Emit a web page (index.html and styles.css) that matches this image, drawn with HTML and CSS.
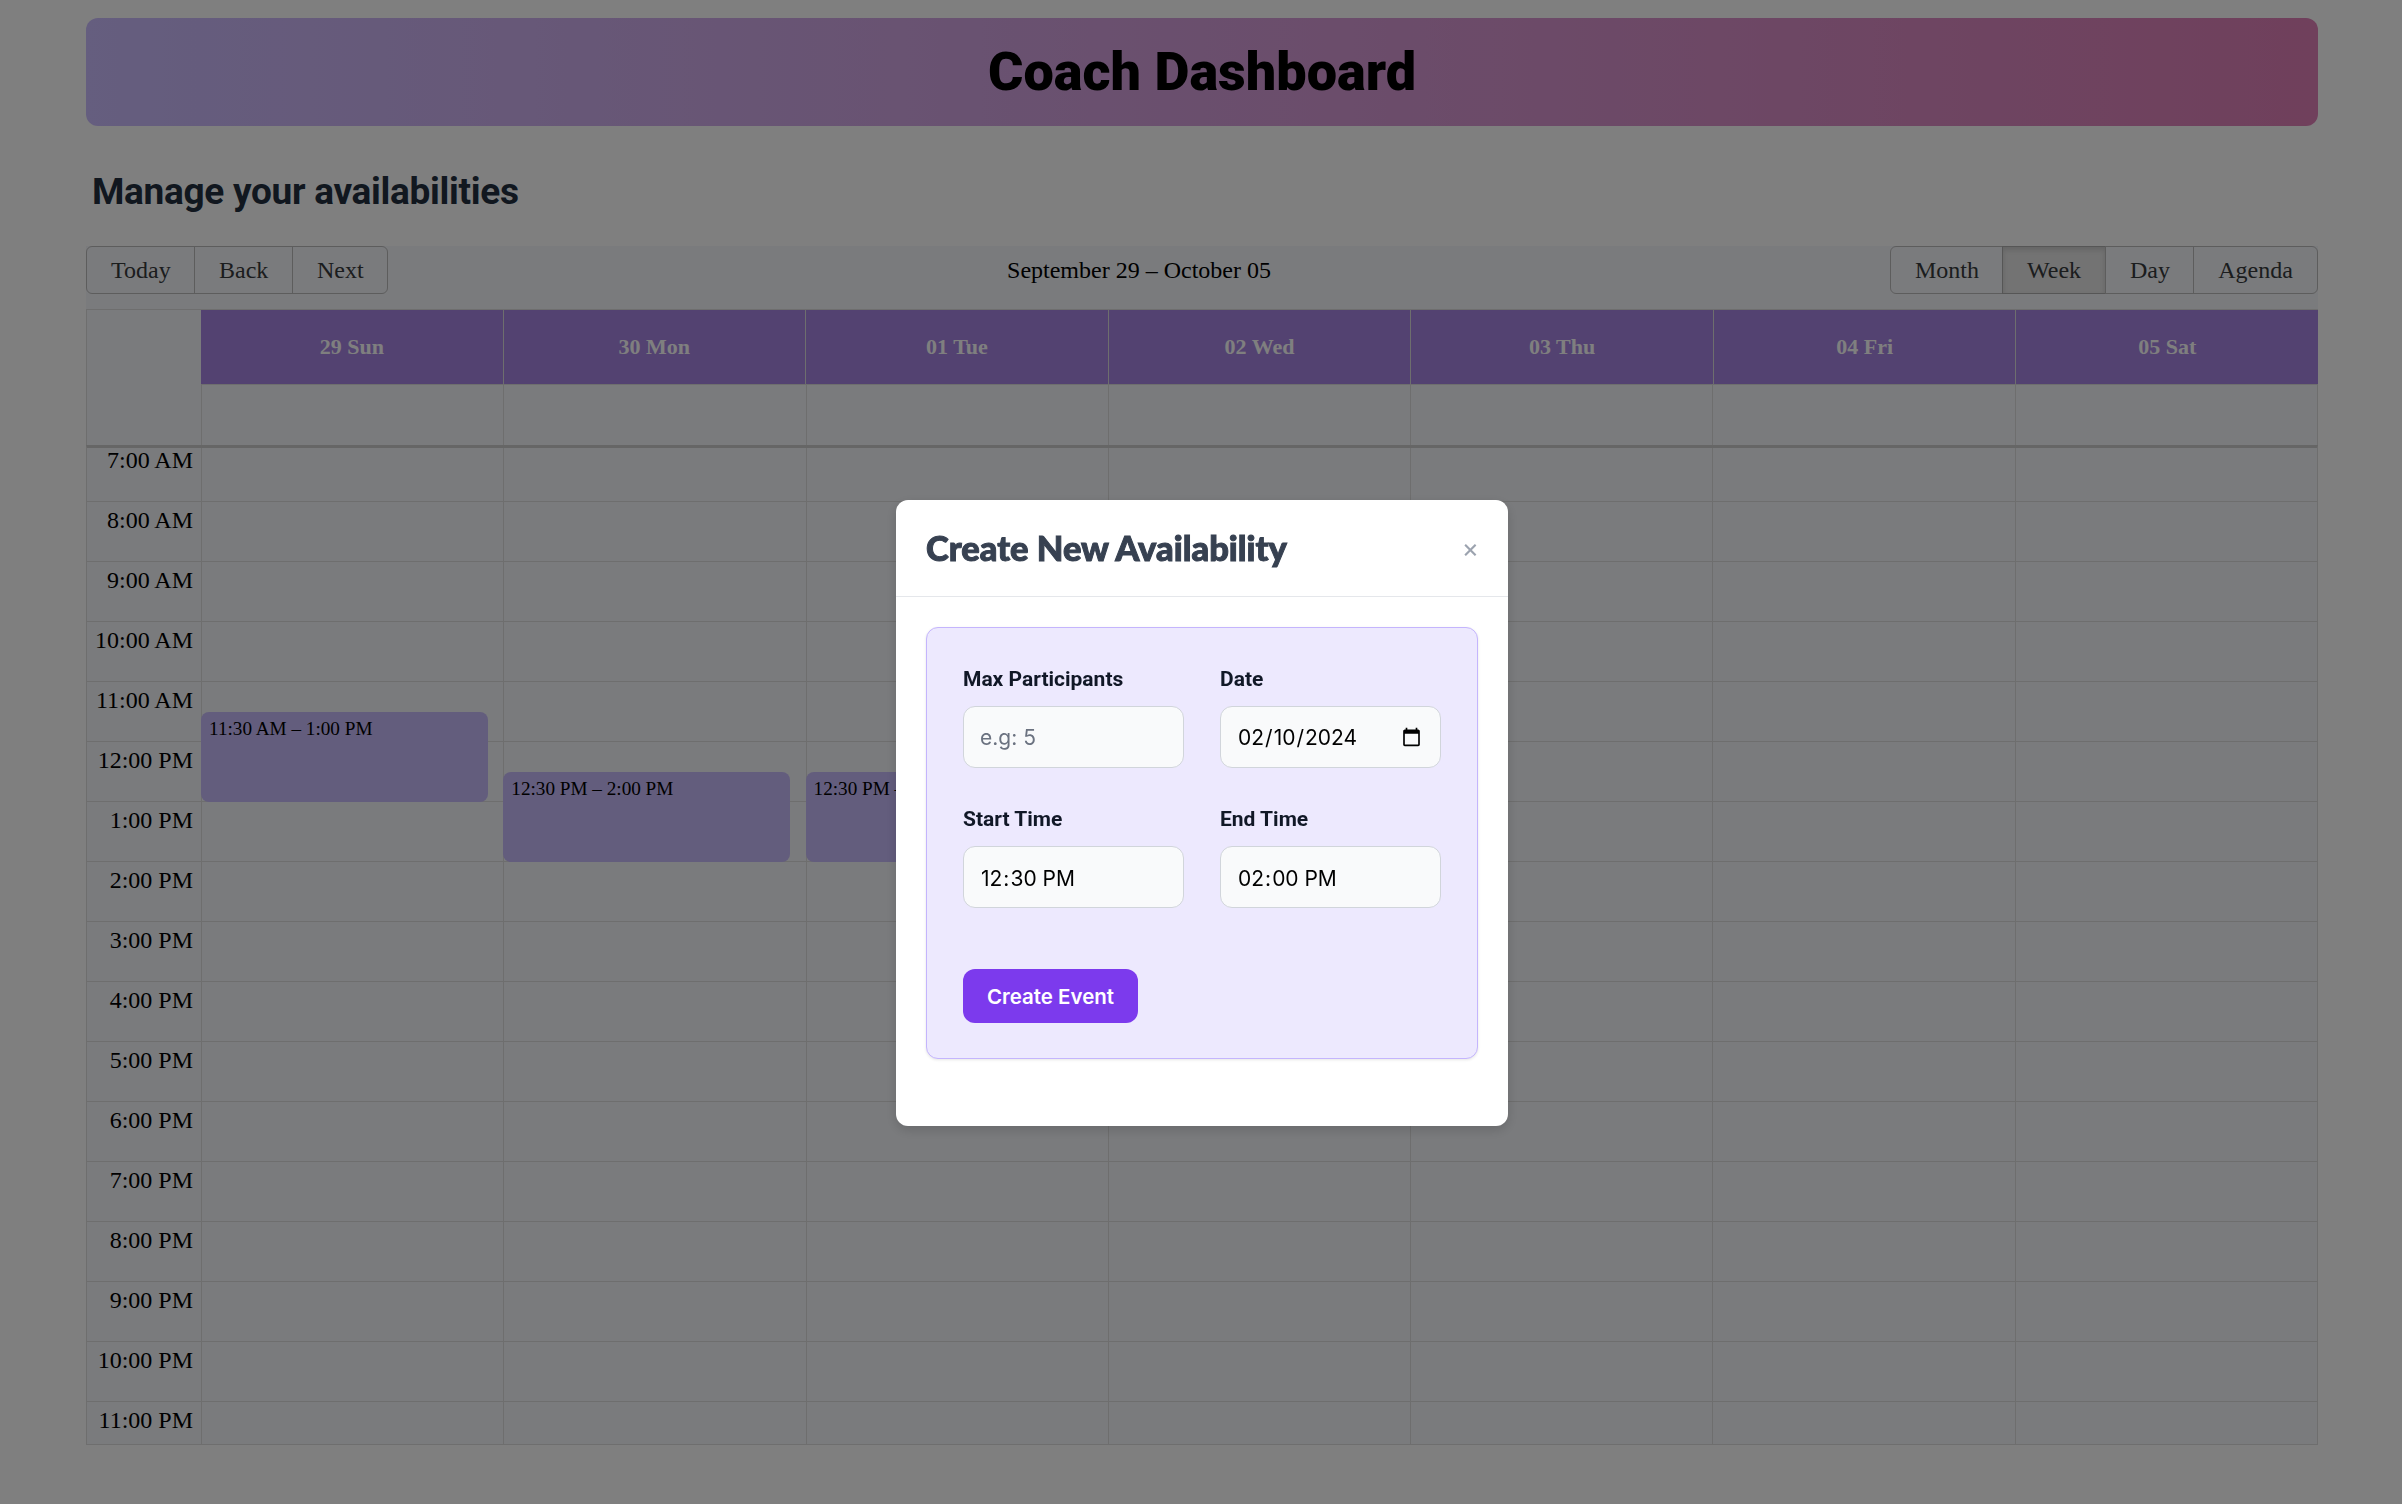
FILE: index.html
```html
<!DOCTYPE html>
<html lang="en">
<head>
<meta charset="utf-8">
<title>Coach Dashboard</title>
<link rel="stylesheet" href="styles.css">
</head>
<body>
<div class="page">
  <header class="banner"><h1 class="banner-title">Coach Dashboard</h1></header>
  <h2 class="subtitle">Manage your availabilities</h2>
  <section class="calendar">
    <div class="toolbar">
      <div class="btn-group">
        <button class="tool-btn btn-today">Today</button><button class="tool-btn btn-back">Back</button><button class="tool-btn btn-next">Next</button>
      </div>
      <div class="toolbar-label">September 29 – October 05</div>
      <div class="btn-group">
        <button class="tool-btn btn-month">Month</button><button class="tool-btn btn-week active">Week</button><button class="tool-btn btn-day">Day</button><button class="tool-btn btn-agenda">Agenda</button>
      </div>
    </div>
    <div class="time-head">
      <div class="head-gutter"></div>
      <div class="head-days">
        <div class="head-row">
          <div class="head-cell">29 Sun</div><div class="head-cell">30 Mon</div><div class="head-cell">01 Tue</div><div class="head-cell">02 Wed</div><div class="head-cell">03 Thu</div><div class="head-cell">04 Fri</div><div class="head-cell">05 Sat</div>
        </div>
        <div class="allday-row">
          <div class="allday-cell"></div><div class="allday-cell"></div><div class="allday-cell"></div><div class="allday-cell"></div><div class="allday-cell"></div><div class="allday-cell"></div><div class="allday-cell"></div>
        </div>
      </div>
    </div>
    <div class="time-body">
      <div class="time-inner">
        <div class="gutter">
          <div class="slot">7:00 AM</div><div class="slot">8:00 AM</div><div class="slot">9:00 AM</div><div class="slot">10:00 AM</div><div class="slot">11:00 AM</div><div class="slot">12:00 PM</div><div class="slot">1:00 PM</div><div class="slot">2:00 PM</div><div class="slot">3:00 PM</div><div class="slot">4:00 PM</div><div class="slot">5:00 PM</div><div class="slot">6:00 PM</div><div class="slot">7:00 PM</div><div class="slot">8:00 PM</div><div class="slot">9:00 PM</div><div class="slot">10:00 PM</div><div class="slot">11:00 PM</div>
        </div>
        <div class="day"><div class="event event-early">11:30 AM – 1:00 PM</div></div>
        <div class="day"><div class="event event-late">12:30 PM – 2:00 PM</div></div>
        <div class="day"><div class="event event-late">12:30 PM – 2:00 PM</div></div>
        <div class="day"></div>
        <div class="day"></div>
        <div class="day"></div>
        <div class="day"></div>
      </div>
    </div>
  </section>
</div>
<div class="overlay">
  <div class="modal">
    <div class="modal-head">
      <h3 class="modal-title">Create New Availability</h3>
      <span class="modal-close">×</span>
    </div>
    <div class="modal-body">
      <form class="card">
        <div class="form-grid">
          <div class="field">
            <label class="field-label">Max Participants</label>
            <input class="input" type="number" placeholder="e.g: 5">
          </div>
          <div class="field">
            <label class="field-label">Date</label>
            <input class="input" type="date" value="2024-02-10">
          </div>
          <div class="field">
            <label class="field-label">Start Time</label>
            <input class="input input-time" type="time" value="12:30">
          </div>
          <div class="field">
            <label class="field-label">End Time</label>
            <input class="input input-time" type="time" value="14:00">
          </div>
        </div>
        <button class="submit" type="button">Create Event</button>
      </form>
    </div>
  </div>
</div>
</body>
</html>
```
FILE: styles.css
```css
* { box-sizing: border-box; }
html, body { margin: 0; padding: 0; height: 100%; background: #fff; overflow: hidden; }
.page { padding: 18px 84px 0 86px; font-family: "Liberation Serif", serif; color: #373a3c; }
.banner { height: 108px; border-radius: 12px; background: linear-gradient(90deg, #cabcfe 0%, #e080b8 100%); display: flex; align-items: center; justify-content: center; }
.banner-title { margin: 0; font-family: "Roboto", sans-serif; font-weight: 900; font-size: 54px; line-height: 1; color: #000; }
.subtitle { margin: 42px 0 30px 6px; font-family: "Roboto", sans-serif; font-weight: 700; font-size: 37px; line-height: 48px; letter-spacing: -0.3px; color: #222f3e; }
.calendar { background: #f4f6fa; }
.toolbar { display: flex; align-items: center; height: 48px; margin-bottom: 15px; }
.toolbar-label { flex: 1; text-align: center; font-size: 24px; color: #000; }
.btn-group { display: flex; }
.tool-btn { font-family: inherit; font-size: 24px; color: #373a3c; background: transparent; border: 1px solid #bbb; margin: 0 0 0 -1px; height: 48px; padding: 0 24px; }
.btn-group .tool-btn:first-child { margin-left: 0; border-radius: 6px 0 0 6px; }
.btn-group .tool-btn:last-child { border-radius: 0 6px 6px 0; }
.tool-btn.active { background: #e6e6e6; border-color: #adadad; box-shadow: inset 0 3px 5px rgba(0,0,0,.125); }
.btn-today { width: 109px; }
.btn-back { width: 99px; }
.btn-next { width: 96px; }
.btn-month { width: 113px; }
.btn-week { width: 104px; }
.btn-day { width: 89px; }
.btn-agenda { width: 125px; }
.time-head { display: flex; border-top: 1px solid #ddd; }
.head-gutter { width: 115px; border-left: 1px solid #ddd; }
.head-days { flex: 1; }
.head-row, .allday-row { display: flex; }
.head-cell { flex: 1; height: 75px; background: #a684e2; color: #fff; font-weight: 700; font-size: 22px; display: flex; align-items: center; justify-content: center; border-left: 1px solid #ddd; border-bottom: 1px solid #ddd; }
.head-cell:first-child { border-left: 0; }
.allday-cell { flex: 1; height: 60px; border-left: 1px solid #ddd; }
.allday-cell:last-child { border-right: 1px solid #ddd; }
.time-body { height: 1000px; overflow: hidden; border-top: 3px solid #ccc; border-left: 1px solid #ddd; border-right: 1px solid #ddd; border-bottom: 1px solid #ddd; }
.time-inner { display: flex; margin-top: -7px; height: 1030px; }
.gutter { width: 114px; }
.slot { height: 60px; border-top: 1px solid #ddd; padding: 4px 8px 0 0; text-align: right; font-size: 24px; line-height: 28px; color: #000; }
.day { flex: 1; position: relative; border-left: 1px solid #ddd; background-image: repeating-linear-gradient(180deg, #ddd 0, #ddd 1px, transparent 1px, transparent 60px); }
.event { position: absolute; left: -1px; width: 287px; height: 90px; border-radius: 8px; background: #c6bafa; padding: 5px 8px; font-size: 19.2px; line-height: 24px; color: #000; }
.event-early { top: 271px; }
.event-late { top: 331px; }
.overlay { position: fixed; inset: 0; background: rgba(0,0,0,.5); display: flex; justify-content: center; align-items: flex-start; padding: 500px 0 0 2px; }
.modal { width: 612px; height: 626px; background: #fff; border-radius: 12px; box-shadow: 0 4px 12px rgba(0,0,0,.15); }
.modal-head { height: 97px; border-bottom: 1px solid #e5e7eb; display: flex; align-items: center; justify-content: space-between; padding: 0 29px 0 30px; }
.modal-title { margin: 0 0 2px; font-family: "Lato", sans-serif; font-weight: 900; font-size: 34.5px; letter-spacing: 0; -webkit-text-stroke: 1px #374151; color: #374151; }
.modal-close { font-family: "Inter", sans-serif; font-size: 26px; color: #9ca3af; line-height: 1; }
.modal-body { padding: 30px 30px 0 30px; }
.card { height: 432px; background: #ede9fe; border: 1px solid #c4b5fd; border-radius: 12px; padding: 36px; box-shadow: 0 1px 3px rgba(0,0,0,.1); }
.form-grid { display: grid; grid-template-columns: 221px 221px; column-gap: 36px; row-gap: 36px; }
.field { display: flex; flex-direction: column; }
.field-label { font-family: "Roboto", sans-serif; font-weight: 700; font-size: 21px; line-height: 30px; color: #111827; margin-bottom: 12px; }
.input { height: 62px; border: 1px solid #d1d5db; border-radius: 12px; background: #f9fafb; padding: 0 16px; font-family: "Inter", sans-serif; font-size: 21px; color: #000; width: 100%; }
.input-time { padding-top: 2px; }
.input::placeholder { color: #6b7280; }
input[type="time"]::-webkit-calendar-picker-indicator { display: none; }
.submit { margin-top: 61px; width: 175px; height: 54px; background: #7c3aed; color: #fff; border: 0; border-radius: 12px; font-family: "Inter", sans-serif; font-weight: 600; font-size: 20.5px; }
```
